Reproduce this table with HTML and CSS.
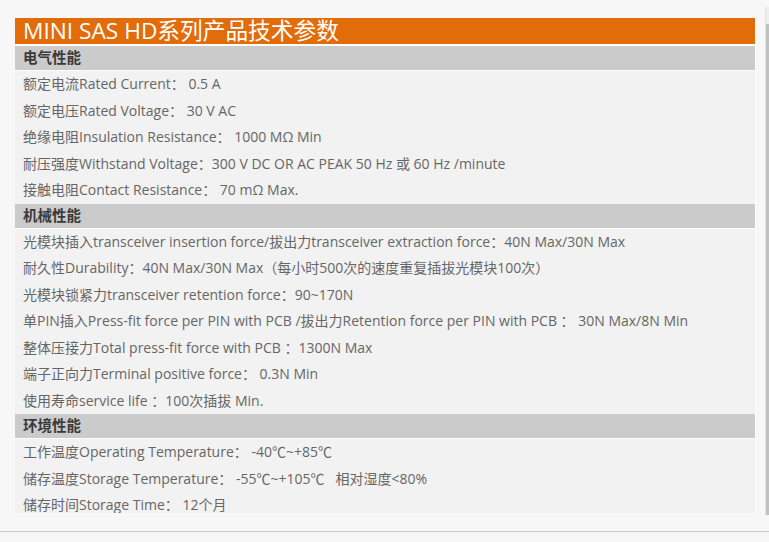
FILE: index.html
```html
<!DOCTYPE html>
<html lang="zh">
<head>
<meta charset="utf-8">
<title>MINI SAS HD系列产品技术参数</title>
<link rel="stylesheet" href="styles.css">
</head>
<body>
<div class="frame">
  <div class="page">
    <div class="panel">
      <div class="title"><span class="title-text">MINI SAS HD系列产品技术参数</span></div>
      <div class="head">电气性能</div>
      <div class="row">额定电流Rated Current： 0.5 A</div>
      <div class="row">额定电压Rated Voltage： 30 V AC</div>
      <div class="row">绝缘电阻Insulation Resistance： 1000 MΩ Min</div>
      <div class="row">耐压强度Withstand Voltage：300 V DC OR AC PEAK 50 Hz 或 60 Hz /minute</div>
      <div class="row">接触电阻Contact Resistance： 70 mΩ Max.</div>
      <div class="head">机械性能</div>
      <div class="row">光模块插入transceiver insertion force/拔出力transceiver extraction force：40N Max/30N Max</div>
      <div class="row">耐久性Durability：40N Max/30N Max（每小时500次的速度重复插拔光模块100次）</div>
      <div class="row">光模块锁紧力transceiver retention force：90~170N</div>
      <div class="row">单PIN插入Press-fit force per PIN with PCB /拔出力Retention force per PIN with PCB ： 30N Max/8N Min</div>
      <div class="row">整体压接力Total press-fit force with PCB ：1300N Max</div>
      <div class="row">端子正向力Terminal positive force： 0.3N Min</div>
      <div class="row">使用寿命service life ：100次插拔 Min.</div>
      <div class="head">环境性能</div>
      <div class="row">工作温度Operating Temperature： -40℃~+85℃</div>
      <div class="row">储存温度Storage Temperature： -55℃~+105℃&nbsp;&nbsp; 相对湿度&lt;80%</div>
      <div class="row">储存时间Storage Time： 12个月</div>
      <div class="row">&nbsp;</div>
    </div>
    <div class="scroll"><div class="thumb"></div></div>
  </div>
</div>
</body>
</html>
```

FILE: styles.css
```css
html, body {
  margin: 0;
  padding: 0;
  background: #f7f7f7;
}
body {
  width: 769px;
  height: 542px;
  overflow: hidden;
  font-family: "Open Sans", "Noto Sans CJK SC", sans-serif;
}
.frame {
  height: 531px;
  border-bottom: 1px solid #c8c8c8;
}
.page {
  display: flex;
  height: 531px;
}
.panel {
  margin: 18px 0 0 15px;
  width: 741px;
  height: 495px;
  overflow: hidden;
  background: #f2f2f2;
  border-right: 1px solid #ffffff;
}
.title {
  display: flex;
  align-items: center;
  height: 26px;
  background: #e26b0a;
  color: #ffffff;
  padding-left: 8px;
  border-bottom: 2px solid #ffffff;
  white-space: nowrap;
}
.title-text {
  font-size: 22.7px;
  line-height: 1;
  padding-top: 1px;
}
.head {
  height: 24px;
  line-height: 24px;
  background: #cbcbcb;
  color: #3a3a3a;
  font-weight: bold;
  font-size: 14.5px;
  padding-left: 8px;
  border-bottom: 1px solid #ffffff;
}
.row {
  height: 26.5px;
  line-height: 26.5px;
  color: #666666;
  font-size: 14px;
  padding-left: 8px;
  white-space: nowrap;
}
.scroll {
  margin: 7px 0 16px 9px;
  width: 3px;
  background: #eeeeee;
  border-left: 1px solid #e2e2e2;
  display: flex;
  flex-direction: column;
}
.thumb {
  margin-top: 17px;
  flex: 1;
  background: #c1c1c1;
}
```
